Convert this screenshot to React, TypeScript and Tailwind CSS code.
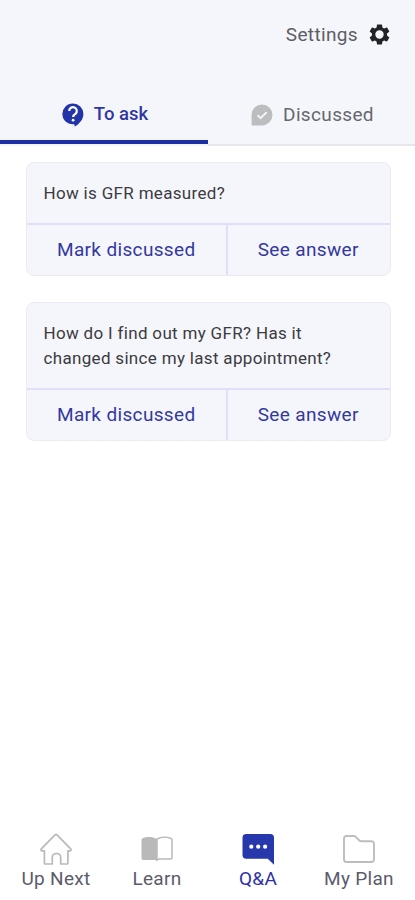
import { useState } from "react";
import clsx from "clsx";

type Question = { id: number; text: string };

const QUESTIONS: Question[] = [
  { id: 1, text: "How is GFR measured?" },
  { id: 2, text: "How do I find out my GFR? Has it changed since my last appointment?" },
];

function GearIcon() {
  return (
    <svg viewBox="2 2 20 20" className="h-[21px] w-[21px]" fill="currentColor">
      <path d="M19.14 12.94c.04-.3.06-.61.06-.94 0-.32-.02-.64-.07-.94l2.03-1.58a.49.49 0 0 0 .12-.61l-1.92-3.32a.488.488 0 0 0-.59-.22l-2.39.96c-.5-.38-1.03-.7-1.62-.94l-.36-2.54a.484.484 0 0 0-.48-.41h-3.84c-.24 0-.43.17-.47.41l-.36 2.54c-.59.24-1.13.57-1.62.94l-2.39-.96c-.22-.08-.47 0-.59.22L2.74 8.87c-.12.21-.08.47.12.61l2.03 1.58c-.05.3-.09.63-.09.94s.02.64.07.94l-2.03 1.58a.49.49 0 0 0-.12.61l1.92 3.32c.12.22.37.29.59.22l2.39-.96c.5.38 1.03.7 1.62.94l.36 2.54c.05.24.24.41.48.41h3.84c.24 0 .44-.17.47-.41l.36-2.54c.59-.24 1.13-.56 1.62-.94l2.39.96c.22.08.47 0 .59-.22l1.92-3.32c.12-.22.07-.47-.12-.61l-2.01-1.58zM12 16A4 4 0 1 1 12 8a4 4 0 0 1 0 8z" />
    </svg>
  );
}

function AskIcon() {
  return (
    <svg viewBox="0 0 22 24" className="h-6 w-[22px]">
      <path d="M11 .5a10.4 10.4 0 1 0 1.2 20.7L12.8 23.5c3.5-2 8.6-6.5 8.6-12.6A10.4 10.4 0 0 0 11 .5z" fill="#2334a8" />
      <path d="M7.2 8a3.8 3.8 0 1 1 6.3 2.8c-1.4 1.1-2.4 1.6-2.4 3.3" fill="none" stroke="#fff" strokeWidth="2.2" />
      <circle cx="11.1" cy="17.2" r="1.4" fill="#fff" />
    </svg>
  );
}

function DiscussedIcon() {
  return (
    <svg viewBox="0 0 22 22" className="h-[22px] w-[22px]">
      <path d="M11 .5A10.4 10.4 0 0 0 .6 11v10.4H11A10.45 10.45 0 0 0 11 .5z" fill="#bcbdbf" />
      <path d="M6.6 11.3l3 2.8 6-6" fill="none" stroke="#f5f6fb" strokeWidth="1.9" />
    </svg>
  );
}

function HomeIcon() {
  return (
    <svg viewBox="0 0 32 32" className="h-8 w-8" fill="none" stroke="#b9b9b9" strokeWidth="1.7" strokeLinejoin="round">
      <path d="M15 1.8a1.4 1.4 0 0 1 2 0l13.7 14.1c.7.8.3 2-.8 2h-2v12.3c0 .5-.3.8-.8.8h-6.4v-6.6c0-5.2-8.4-5.2-8.4 0V31H5.2c-.5 0-.8-.3-.8-.8V17.9H2.1c-1.1 0-1.5-1.2-.8-2z" />
    </svg>
  );
}

function BookIcon() {
  return (
    <svg viewBox="0 0 32 26" className="h-[26px] w-8">
      <path d="M16 3C12 .2 5 .5 1.6 2.2 1 2.5.5 3 .5 4v18.3c0 1 .8 1.6 1.7 1.6H14c1 0 1.3 1 2 1z" fill="#b9b9b9" />
      <path d="M16 3.2c4-2.5 10-2.3 13.9-.7.7.3 1.1.8 1.1 1.6v17.7c0 .8-.6 1.3-1.4 1.3H18c-1.1 0-1.3.9-2 .9z" fill="#fff" stroke="#b9b9b9" strokeWidth="1.5" strokeLinejoin="round" />
    </svg>
  );
}

function ChatIcon() {
  return (
    <svg viewBox="0 0 32 32" className="h-8 w-8">
      <path d="M4.2 1h24A3.7 3.7 0 0 1 32 4.7v27.1l-6.3-6H4.2A3.7 3.7 0 0 1 .5 22.1V4.7A3.7 3.7 0 0 1 4.2 1z" fill="#2738ad" />
      <g fill="#fff">
        <circle cx="9.3" cy="13.7" r="2.1" />
        <circle cx="16.2" cy="13.7" r="2.1" />
        <circle cx="23.1" cy="13.7" r="2.1" />
      </g>
    </svg>
  );
}

function FolderIcon() {
  return (
    <svg viewBox="0 0 32 28" className="h-7 w-8" fill="none" stroke="#bdbdbd" strokeWidth="1.9" strokeLinejoin="round">
      <path d="M3.5 1h7.2c.8 0 1.4.3 2 .9l3.7 3.6c.5.5 1 .7 1.7.7h10.4A2.5 2.5 0 0 1 31 8.7v15.8a2.5 2.5 0 0 1-2.5 2.5h-25A2.5 2.5 0 0 1 1 24.5v-21A2.5 2.5 0 0 1 3.5 1z" />
    </svg>
  );
}

const NAV = [
  { label: "Up Next", icon: <HomeIcon /> },
  { label: "Learn", icon: <BookIcon /> },
  { label: "Q&A", icon: <ChatIcon /> },
  { label: "My Plan", icon: <FolderIcon /> },
];

function QuestionCard({ question }: { question: Question }) {
  return (
    <div className="overflow-hidden rounded-lg border border-[#ebecf3] bg-[#f5f6fb]">
      <div className="px-[17px] pt-[18px] pb-[16px] text-[17px] leading-[25.5px] tracking-[0.32px] text-[#3b3b40]">
        <p className="w-[300px]">{question.text}</p>
      </div>
      <div className="flex h-[52.5px] border-t-2 border-[#dfdffb] text-[19px] tracking-[0.35px] text-[#3338a0]">
        <button className="w-[199.5px] pt-[1px]">Mark discussed</button>
        <button className="flex-1 border-l-2 border-[#dfdffb] pt-[1px] pr-[1px]">See answer</button>
      </div>
    </div>
  );
}

export default function App() {
  const [tab, setTab] = useState<"ask" | "discussed">("ask");

  return (
    <div className="flex h-[900px] w-full flex-col bg-white font-['Roboto',sans-serif]">
      {/* Header */}
      <header className="flex h-[146px] flex-col justify-between bg-[#f5f6fb]">
        <button className="mt-[21px] mr-[25px] flex h-[27px] items-center gap-[11px] self-end text-[#222327]">
          <span className="pt-[1px] text-[19px] tracking-[0.35px] text-[#5c5d65]">Settings</span>
          <GearIcon />
        </button>

        <div className="flex h-[62px] text-[19px]">
          <button
            onClick={() => setTab("ask")}
            className={clsx(
              "flex w-[208px] items-center justify-center gap-[10px] pt-[6px] pl-[2px]",
              tab === "ask" ? "mb-[2px] border-b-4 border-[#1e2fa3] font-medium text-[#3036a3]" : "text-[#66676e]"
            )}
          >
            <AskIcon />
            <span className="text-[18.5px]">To ask</span>
          </button>
          <button
            onClick={() => setTab("discussed")}
            className="flex flex-1 items-center justify-center gap-[10px] border-b-2 border-[#e6e7eb] pt-[2px] pl-[2px] tracking-[0.35px] text-[#66676e]"
          >
            <DiscussedIcon />
            <span>Discussed</span>
          </button>
        </div>
      </header>

      {/* Questions */}
      <main className="flex flex-1 flex-col gap-[25.5px] px-[25.5px] pt-4 pr-[24.5px]">
        {QUESTIONS.map((q) => (
          <QuestionCard key={q.id} question={q} />
        ))}
      </main>

      {/* Bottom nav */}
      <nav className="mx-[5.5px] grid h-[68px] grid-cols-4 text-[19px] text-[#5c5b6c]">
        {NAV.map((item) => (
          <button key={item.label} className="flex flex-col items-center">
            <span className="flex h-[34px] items-center">{item.icon}</span>
            <span className={clsx("leading-[25px] tracking-[0.3px]", item.label === "Q&A" && "text-[#2d32a8]")}>{item.label}</span>
          </button>
        ))}
      </nav>
    </div>
  );
}
